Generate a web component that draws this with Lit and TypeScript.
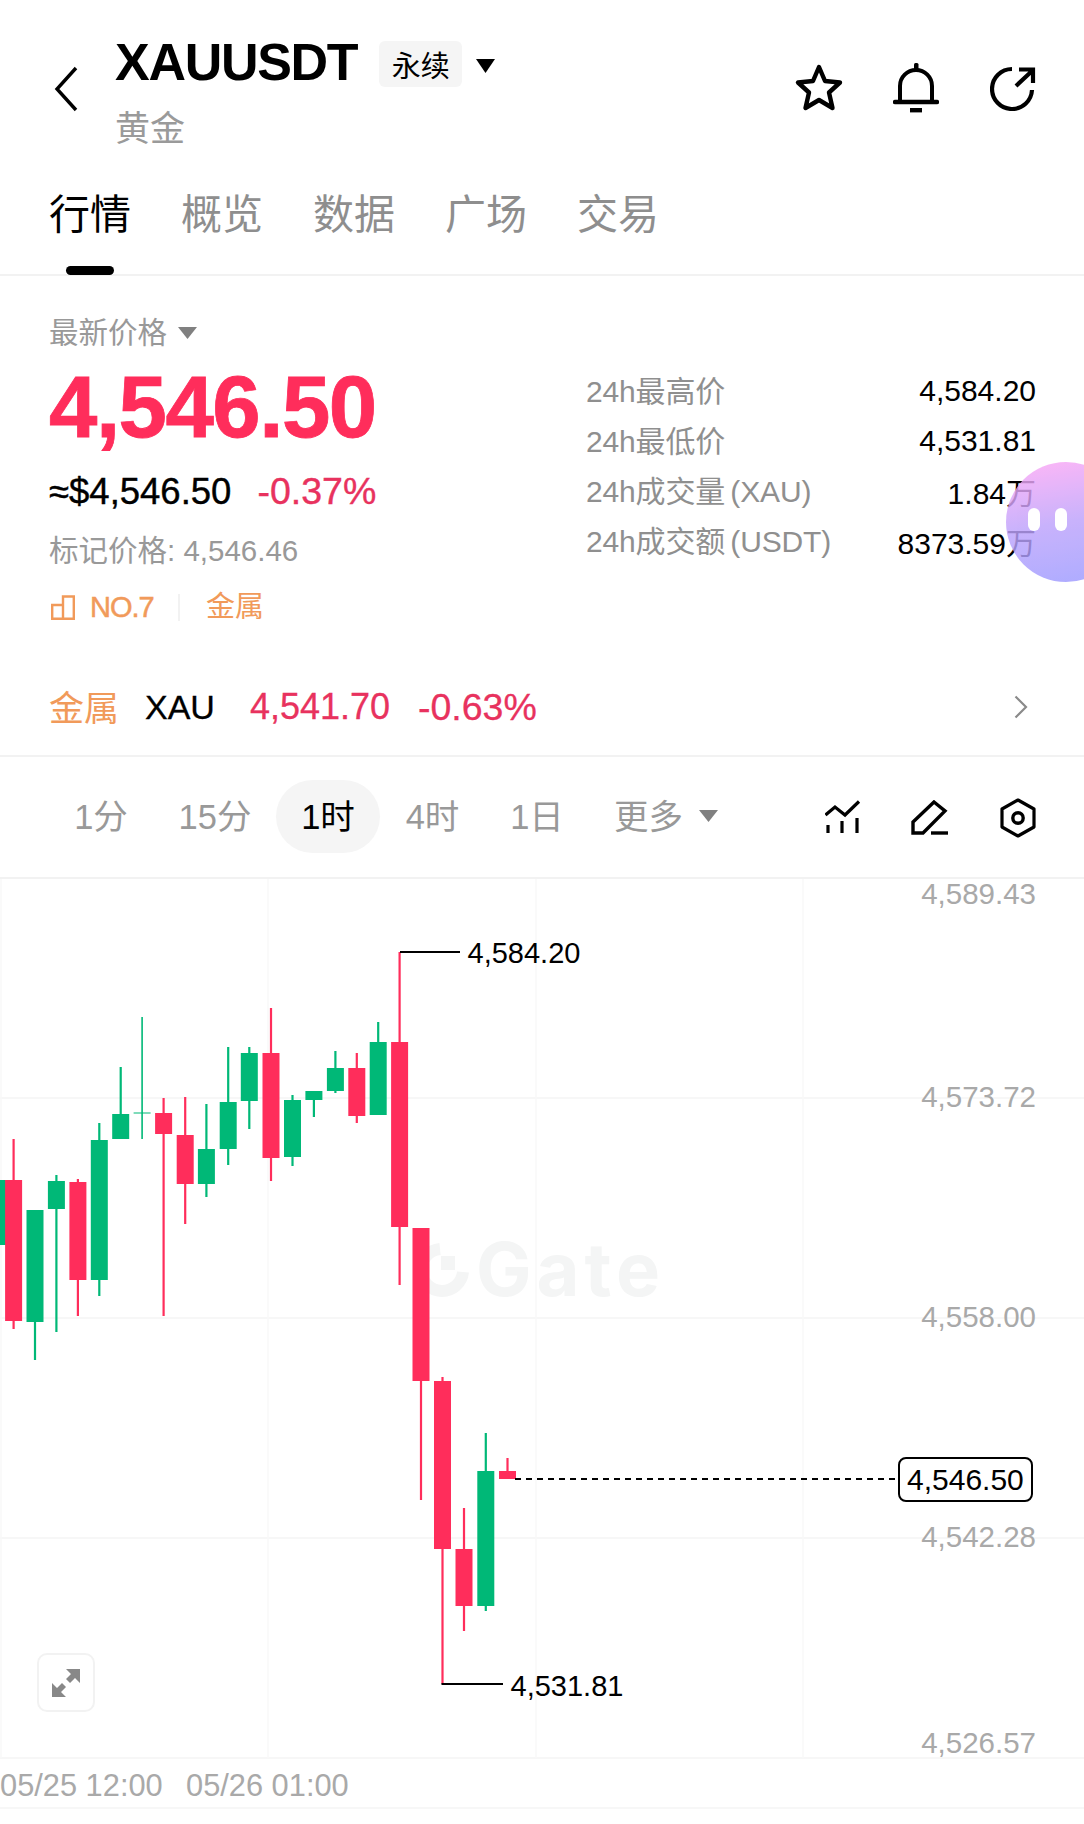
import { LitElement, html, css, svg } from "lit";
import { customElement } from "lit/decorators.js";

const RED = "#ff2d5b";
const GREEN = "#00b877";
type C = [number, number, number, number, number, 0 | 1];
// x, wickTop, wickBottom, bodyTop, bodyBottom, up?
const candles: C[] = [
  [-1, 1180, 1245, 1180, 1245, 1],
  [13.6, 1139, 1329, 1180, 1321, 0],
  [35, 1210, 1360, 1210, 1322, 1],
  [56.4, 1175, 1332, 1181, 1209, 1],
  [77.9, 1179, 1316, 1182, 1280, 0],
  [99.3, 1123, 1296, 1140, 1280, 1],
  [120.7, 1067, 1139, 1114, 1139, 1],
  [142.1, 1017, 1139, 1112.5, 1113.5, 1],
  [163.6, 1098, 1316, 1113, 1134, 0],
  [185.2, 1097, 1224, 1135, 1184, 0],
  [206.4, 1104, 1197, 1149, 1184, 1],
  [228.2, 1047, 1165, 1102, 1149, 1],
  [249.3, 1047, 1129, 1053, 1101, 1],
  [271, 1008, 1181, 1053, 1158, 0],
  [292.5, 1095, 1166, 1100, 1157, 1],
  [313.9, 1091, 1117, 1091, 1100, 1],
  [335.4, 1051, 1093, 1068, 1091, 1],
  [356.8, 1053, 1123, 1068, 1116, 0],
  [378.2, 1022, 1115, 1042, 1115, 1],
  [399.6, 952, 1285, 1042, 1227, 0],
  [421, 1228, 1500, 1228, 1381, 0],
  [442.5, 1377, 1684, 1381, 1549, 0],
  [464, 1508, 1631, 1549, 1606, 0],
  [485.8, 1433, 1611, 1471, 1606, 1],
  [507.5, 1458, 1479, 1471, 1479, 0],
];

const TOP = 879;

@customElement("app-root")
export class AppRoot extends LitElement {
  static styles = css`
    :host {
      display: block;
      width: 1084px;
      height: 1824px;
      background: #fff;
      overflow: hidden;
      position: relative;
      font-family: "Liberation Sans", "Noto Sans CJK SC", sans-serif;
      color: #000;
      white-space: nowrap;
    }
    .header {
      display: flex;
      align-items: flex-start;
      height: 190px;
      box-sizing: border-box;
      padding: 36px 48px 0 54px;
    }
    .back {
      width: 24px;
      height: 46px;
      margin-top: 30px;
      flex: none;
    }
    .title-col {
      margin-left: 37px;
      flex: 1;
    }
    .title-row {
      display: flex;
      align-items: center;
      height: 56px;
    }
    .title {
      font-size: 52px;
      font-weight: 700;
      letter-spacing: -1.3px;
      line-height: 56px;
      margin-top: -4px;
    }
    .badge {
      margin-left: 22px;
      width: 83px;
      height: 46px;
      display: flex;
      align-items: center;
      justify-content: center;
      background: #f5f5f5;
      border-radius: 6px;
      font-size: 29px;
      margin-top: 0;
    }
    .caret {
      margin-left: 14px;
      margin-top: 4px;
      width: 19px;
      height: 14px;
      display: block;
    }
    .sub {
      font-size: 35px;
      line-height: 40px;
      color: #9a9a9a;
      margin-top: 17px;
    }
    .actions {
      display: flex;
      align-items: center;
      margin-top: 26px;
    }
    .actions svg { display: block; }
    .actions .star { width: 50px; height: 50px; }
    .actions .bell { width: 46px; height: 52px; margin-left: 49px; }
    .actions .share { width: 46px; height: 46px; margin-left: 51px; }

    .tabs {
      display: flex;
      gap: 50px;
      padding-left: 49px;
      height: 86px;
      box-sizing: border-box;
      border-bottom: 2px solid #f2f2f2;
      font-size: 41px;
      color: #8e8e8e;
      line-height: 50px;
    }
    .tab { position: relative; height: 84px; }
    .tab.on { color: #000; }
    .tab.on::after {
      content: "";
      position: absolute;
      left: 17px;
      width: 48px;
      height: 9px;
      top: 76px;
      border-radius: 5px;
      background: #000;
    }

    .stats {
      height: 338px;
      box-sizing: border-box;
      padding: 39px 48px 0 49px;
      display: flex;
    }
    .left { width: 537px; flex: none; }
    .latest {
      display: flex;
      align-items: center;
      font-size: 29.5px;
      line-height: 36px;
      color: #999;
    }
    .latest svg { margin-left: 11px; width: 19px; height: 12px; }
    .big {
      font-size: 87px;
      font-weight: 700;
      color: #ff2d5b;
      letter-spacing: -1.5px;
      line-height: 86px;
      margin-top: 13px;
      -webkit-text-stroke: 0.8px currentColor;
    }
    .ref {
      display: flex;
      align-items: baseline;
      gap: 26px;
      font-size: 36.5px;
      line-height: 42px;
      margin-top: 20px;
      -webkit-text-stroke: 0.4px currentColor;
    }
    .neg { color: #e8325e; }
    .ref .neg { font-size: 37.5px; }
    .mark {
      font-size: 29.5px;
      line-height: 36px;
      color: #999;
      margin-top: 20px;
    }
    .rank {
      display: flex;
      align-items: center;
      color: #f19a5a;
      font-size: 29px;
      line-height: 36px;
      margin-top: 20px;
    }
    .rank svg { width: 24px; height: 25px; margin-right: 15px; margin-left: 2px; }
    .rank .no {
      letter-spacing: -1px;
      width: 63px;
      -webkit-text-stroke: 0.5px currentColor;
    }
    .rank .sep {
      width: 2px;
      height: 27px;
      background: #f2f2f2;
      margin: 0 26px 0 25px;
    }
    .right {
      flex: 1;
      padding-top: 51px;
    }
    .row {
      display: flex;
      justify-content: space-between;
      height: 50px;
      align-items: center;
      font-size: 30px;
    }
    .row .k { color: #8f8f8f; word-spacing: -3px; letter-spacing: -0.15px; margin-top: -4px; }
    .metal {
      height: 143px;
      box-sizing: border-box;
      border-bottom: 2px solid #f2f2f2;
      display: flex;
      align-items: center;
      padding: 45px 56px 0 49px;
      font-size: 36px;
      -webkit-text-stroke: 0.3px currentColor;
    }
    .metal .cat { color: #f19a5a; font-size: 35px; width: 96px; -webkit-text-stroke: 0; margin-top: -4px; }
    .metal .sym { font-size: 34px; width: 105px; }
    .metal .p { color: #e8325e; width: 168px; }
    .metal .c { color: #e8325e; flex: 1; font-size: 37.5px; }
    .metal svg { width: 14px; height: 24px; }

    .periods {
      height: 122px;
      box-sizing: border-box;
      border-bottom: 2px solid #f2f2f2;
      display: flex;
      align-items: center;
      font-size: 34.5px;
      color: #999;
      padding-left: 74px;
      padding-bottom: 2px;
    }
    .pd {
      height: 73px;
      box-sizing: border-box;
      padding-bottom: 4px;
      display: flex;
      align-items: center;
      justify-content: center;
    }
    .pd.w1 { width: 54px; margin-right: 50px; }
    .pd.w2 { width: 74px; margin-right: 24px; }
    .pd.on {
      width: 104px;
      background: #f5f5f5;
      border-radius: 37px;
      color: #000;
      margin-right: 25px;
    }
    .pd.w4 { width: 55px; margin-right: 51px; }
    .pd.w5 { width: 52px; margin-right: 50px; }
    .pd.more { width: 71px; }
    .more-caret { width: 19px; height: 12px; margin-left: 15px; }
    .tools { margin-left: auto; margin-right: 48px; margin-top: 4px; display: flex; align-items: center; }
    .tools svg { display: block; }
    .tools .i1 { width: 36px; height: 36px; margin-left: 2px; }
    .tools .i2 { width: 38px; height: 36px; margin-left: 50px; }
    .tools .i3 { width: 36px; height: 40px; margin-left: 51px; }

    .chart { position: relative; height: 929px; }
    .chart > svg {
      position: absolute;
      left: 0;
      top: 0;
      width: 1084px;
      height: 945px;
      display: block;
      overflow: visible;
    }
    .gl { stroke: #f5f5f5; stroke-width: 1.5; }
    .vl { stroke: #f9f9f9; stroke-width: 1.5; }
    .axis { font-size: 29.5px; fill: #a9a9a9; text-anchor: end; font-family: "Liberation Sans", sans-serif; }
    .time { font-size: 30.8px; fill: #a9a9a9; font-family: "Liberation Sans", sans-serif; }
    .lbl { font-size: 29px; fill: #000; font-family: "Liberation Sans", sans-serif; }
    .lbl.now { font-size: 30px; }
    .wm { font-size: 74px; font-weight: 700; letter-spacing: 5px; fill: #f4f5f5; font-family: Inter, "Liberation Sans", sans-serif; }

    .expand {
      position: absolute;
      left: 37px;
      top: 774px;
      width: 58px;
      height: 59px;
      box-sizing: border-box;
      border: 2px solid #f2f2f2;
      border-radius: 10px;
      background: #fff;
      display: flex;
      align-items: center;
      justify-content: center;
    }
    .expand svg { width: 30px; height: 30px; }

    .bubble {
      position: absolute;
      left: 1006px;
      top: 462px;
      width: 120px;
      height: 120px;
      border-radius: 50%;
      background: linear-gradient(170deg, #ffa8f5 0%, #bda2fc 50%, #9a9aff 100%);
      opacity: 0.82;
    }
    .eye {
      position: absolute;
      top: 46px;
      width: 12px;
      height: 23px;
      border-radius: 6px;
      background: #fff;
    }
    .eye.a { left: 22px; }
    .eye.b { left: 49px; }
  `;

  private chart() {
    const Y = (y: number) => y - TOP;
    return html`<svg viewBox="0 0 1084 945" xmlns="http://www.w3.org/2000/svg">
      ${[1098, 1318, 1538, 1758, 1808].map((y) => svg`<line class="gl" x1="0" x2="1084" y1=${Y(y)} y2=${Y(y)}></line>`)}
      ${[1, 268, 536, 803].map((x) => svg`<line class="vl" x1=${x} x2=${x} y1="0" y2=${Y(1758)}></line>`)}

      <text class="wm" x="476" y=${Y(1296)}>Gate</text>
      <path d="M463 ${Y(1272)} A21 21 0 1 1 440 ${Y(1249)}" fill="none" stroke="#f4f5f5" stroke-width="12"></path>
      <rect x="441" y=${Y(1256)} width="14" height="14" fill="#f4f5f5"></rect>

      ${[
        ["4,589.43", 893],
        ["4,573.72", 1096],
        ["4,558.00", 1316],
        ["4,542.28", 1536],
        ["4,526.57", 1742],
      ].map(([t, y]) => svg`<text class="axis" x="1036" y=${Y(y as number) + 10.5}>${t}</text>`)}

      ${candles.map(([x, wt, wb, bt, bb, up]) => {
        const c = up ? GREEN : RED;
        const bw = 17;
        const ww = bb - bt < 2 ? 1.6 : 2.2;
        return svg`<rect x=${x - ww / 2} y=${Y(wt)} width=${ww} height=${wb - wt} fill=${c}></rect>
          <rect x=${x - bw / 2} y=${Y(bt)} width=${bw} height=${bb - bt} fill=${c}></rect>`;
      })}

      <path d="M400 ${Y(952)} H460" stroke="#000" stroke-width="2" fill="none"></path>
      <text class="lbl" x="467.5" y=${Y(963)}>4,584.20</text>
      <path d="M441.5 ${Y(1684)} H503" stroke="#000" stroke-width="2" fill="none"></path>
      <text class="lbl" x="510.5" y=${Y(1696)}>4,531.81</text>

      <line x1="515" x2="899" y1=${Y(1479)} y2=${Y(1479)} stroke="#000" stroke-width="2" stroke-dasharray="6 5"></line>
      <rect x="899" y=${Y(1458)} width="133" height="43" rx="7" fill="#fff" stroke="#000" stroke-width="2"></rect>
      <text class="lbl now" x="907" y=${Y(1490)}>4,546.50</text>

      <text class="time" x="0" y=${Y(1796)}>05/25 12:00</text>
      <text class="time" x="186" y=${Y(1796)}>05/26 01:00</text>
    </svg>`;
  }

  render() {
    return html`
      <div class="header">
        <svg class="back" viewBox="0 0 24 46"><path d="M22 2 L3 23 L22 44" fill="none" stroke="#000" stroke-width="3.4"></path></svg>
        <div class="title-col">
          <div class="title-row">
            <span class="title">XAUUSDT</span>
            <span class="badge">永续</span>
            <svg class="caret" viewBox="0 0 19 14"><path d="M0 0 H19 L9.5 14 Z" fill="#000"></path></svg>
          </div>
          <div class="sub">黄金</div>
        </div>
        <div class="actions">
          <svg class="star" viewBox="0 0 50 50"><path d="M25 4 L31 18 L46 19.5 L35 29.5 L38.5 45 L25 37 L11.5 45 L15 29.5 L4 19.5 L19 18 Z" fill="none" stroke="#000" stroke-width="4.4" stroke-linejoin="round"></path></svg>
          <svg class="bell" viewBox="0 0 46 52"><path d="M7 39 V24 A16 16 0 0 1 39 24 V39" fill="none" stroke="#000" stroke-width="4"></path><path d="M2 40 H44" stroke="#000" stroke-width="4.4" stroke-linecap="round"></path><rect x="21" y="1" width="4.5" height="7" rx="1.5" fill="#000"></rect><rect x="17" y="46" width="12" height="4.4" fill="#000"></rect></svg>
          <svg class="share" viewBox="0 0 46 46"><path d="M22 4 A20 20 0 1 0 42 25" fill="none" stroke="#000" stroke-width="4.2"></path><path d="M26 21 L42 6 M29 4.5 H43 V18" fill="none" stroke="#000" stroke-width="4.2"></path></svg>
        </div>
      </div>

      <div class="tabs">
        <div class="tab on">行情</div>
        <div class="tab">概览</div>
        <div class="tab">数据</div>
        <div class="tab">广场</div>
        <div class="tab">交易</div>
      </div>

      <div class="stats">
        <div class="left">
          <div class="latest">最新价格<svg viewBox="0 0 19 12"><path d="M0 0 H19 L9.5 12 Z" fill="#808080"></path></svg></div>
          <div class="big">4,546.50</div>
          <div class="ref"><span>≈$4,546.50</span><span class="neg">-0.37%</span></div>
          <div class="mark">标记价格: 4,546.46</div>
          <div class="rank">
            <svg viewBox="0 0 24 25"><path d="M1.2 10 H12 V23.8 H1.2 Z M12 10 V1.5 H22.8 V23.8 H12" fill="none" stroke="#f19a5a" stroke-width="2.4"></path></svg>
            <span class="no">NO.7</span><span class="sep"></span><span>金属</span>
          </div>
        </div>
        <div class="right">
          <div class="row"><span class="k">24h最高价</span><span>4,584.20</span></div>
          <div class="row"><span class="k">24h最低价</span><span>4,531.81</span></div>
          <div class="row"><span class="k">24h成交量 (XAU)</span><span>1.84万</span></div>
          <div class="row"><span class="k">24h成交额 (USDT)</span><span>8373.59万</span></div>
        </div>
      </div>

      <div class="metal">
        <span class="cat">金属</span><span class="sym">XAU</span><span class="p">4,541.70</span><span class="c">-0.63%</span>
        <svg viewBox="0 0 14 24"><path d="M1.5 1.5 L12 12 L1.5 22.5" fill="none" stroke="#8a8a8a" stroke-width="2.2"></path></svg>
      </div>

      <div class="periods">
        <div class="pd w1">1分</div>
        <div class="pd w2">15分</div>
        <div class="pd on">1时</div>
        <div class="pd w4">4时</div>
        <div class="pd w5">1日</div>
        <div class="pd more">更多</div>
        <svg class="more-caret" viewBox="0 0 19 12"><path d="M0 0 H19 L9.5 12 Z" fill="#808080"></path></svg>
        <div class="tools">
          <svg class="i1" viewBox="0 0 36 36"><path d="M0.5 15 L10 7 L20 15 L34 1.5" fill="none" stroke="#000" stroke-width="3.2"></path><path d="M3 25 V33 M17 21 V33 M32 18 V33" stroke="#000" stroke-width="3.2"></path></svg>
          <svg class="i2" viewBox="0 0 38 36"><path d="M23 2 L34 11 L12 33 H2 V22 Z" fill="none" stroke="#000" stroke-width="3.4"></path><path d="M20 33 H37" stroke="#000" stroke-width="3.4"></path></svg>
          <svg class="i3" viewBox="0 0 36 40"><path d="M18 2 L34 11 V29 L18 38 L2 29 V11 Z" fill="none" stroke="#000" stroke-width="3.2" stroke-linejoin="round"></path><circle cx="18" cy="20" r="5.2" fill="none" stroke="#000" stroke-width="3.4"></circle></svg>
        </div>
      </div>

      <div class="chart">
        ${this.chart()}
        <div class="expand"><svg viewBox="0 0 30 30"><path d="M29 1 V15 L24 10 L19 15 L15 11 L20 6 L15 1 Z M1 29 V15 L6 20 L11 15 L15 19 L10 24 L15 29 Z" fill="#888"></path></svg></div>
      </div>

      <div class="bubble"><span class="eye a"></span><span class="eye b"></span></div>
    `;
  }
}
